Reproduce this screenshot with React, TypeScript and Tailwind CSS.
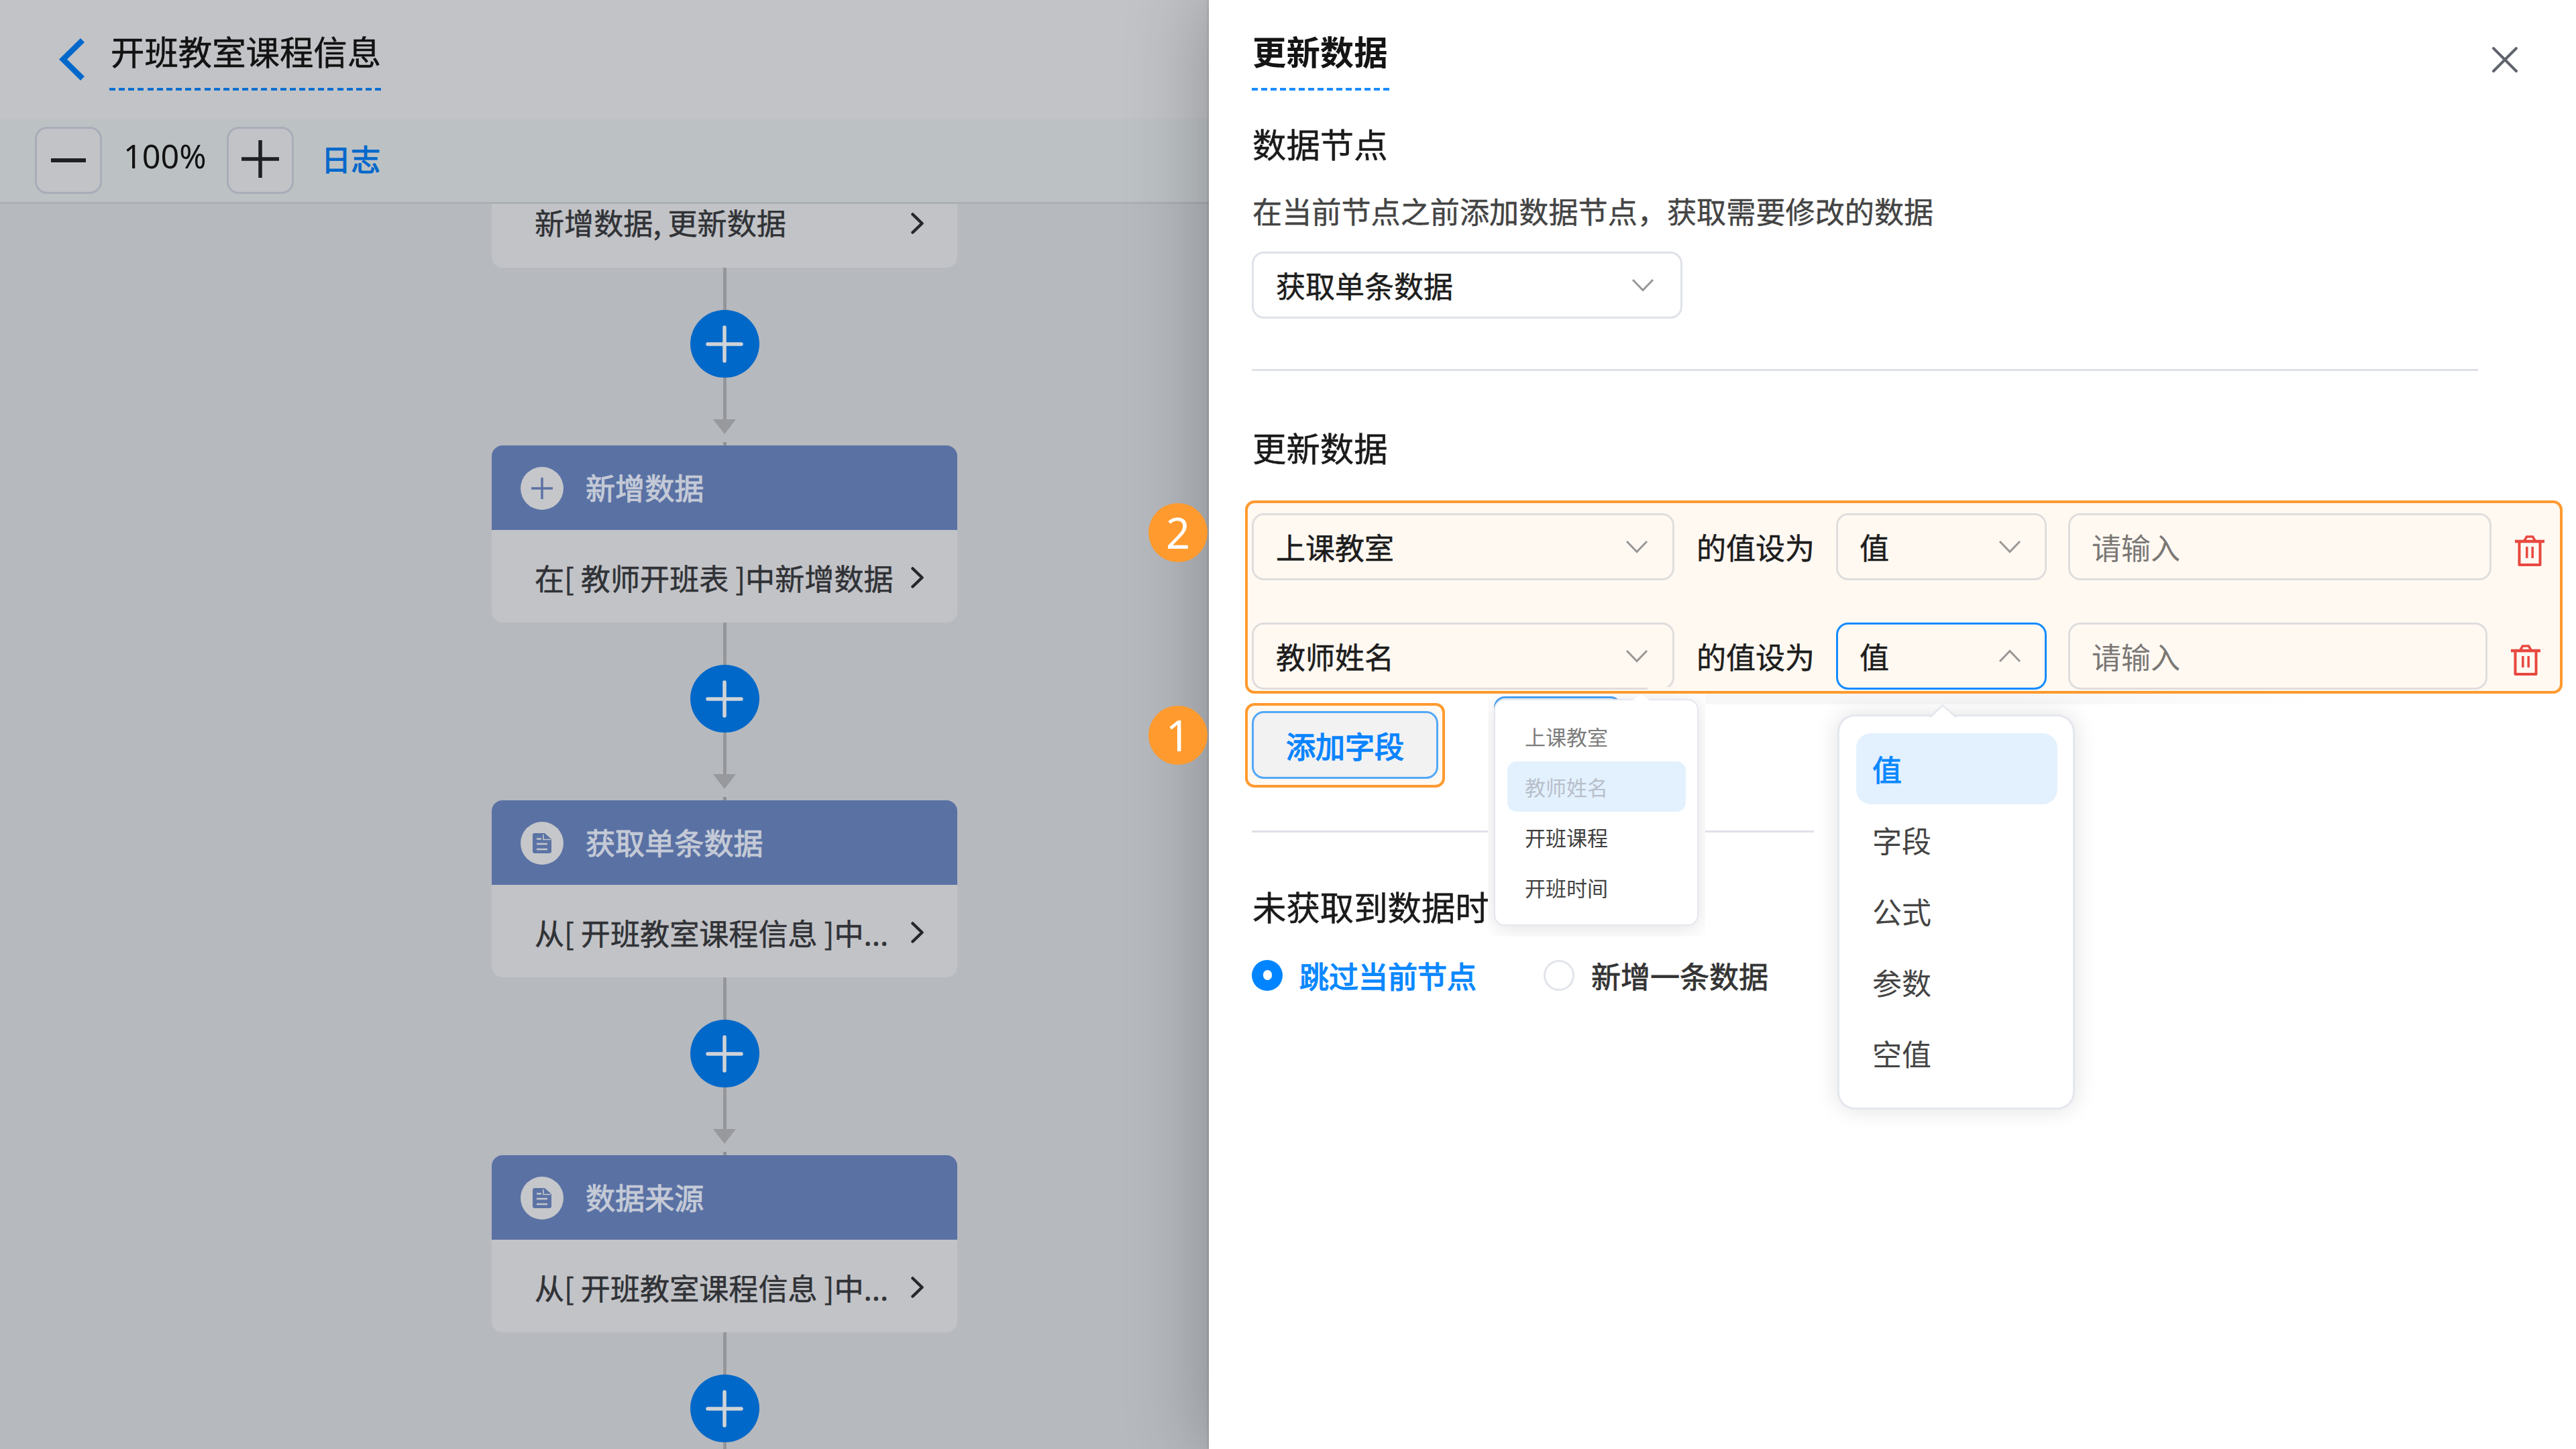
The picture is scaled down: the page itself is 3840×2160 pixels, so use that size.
import React from "react";

const FONT = "font-['Noto_Sans_CJK_SC','Noto_Sans',sans-serif]";

type NodeIcon = "plus" | "doc";

function Chevron({ up = false }: { up?: boolean }) {
  return (
    <svg width="34" height="20" viewBox="0 0 34 20" fill="none" className={up ? "rotate-180" : ""}>
      <path d="M2 2 L17 17.5 L32 2" stroke="#9a9896" strokeWidth="3" />
    </svg>
  );
}

function ArrowRight() {
  return (
    <svg width="20" height="32" viewBox="0 0 20 32" fill="none" className="shrink-0">
      <path d="M2.5 2.5 L16.5 16 L2.5 29.5" stroke="#26272a" strokeWidth="4.5" strokeLinecap="round" strokeLinejoin="round" />
    </svg>
  );
}

function Dashes({ className }: { className: string }) {
  return <div className={"h-[4px] " + className} />;
}

function IconBubble({ icon }: { icon: NodeIcon }) {
  return (
    <div className="flex size-[64px] items-center justify-center rounded-full bg-[#c5c7ca]">
      {icon === "plus" ? (
        <svg width="32" height="32" viewBox="0 0 32 32" fill="none" stroke="#5b72a4" strokeWidth="3.5">
          <path d="M16 0 V32 M0 16 H32" />
        </svg>
      ) : (
        <svg width="28" height="30" viewBox="0 0 28 30">
          <path d="M3 0 H18 L28 9 V27 Q28 30 25 30 H3 Q0 30 0 27 V3 Q0 0 3 0 Z" fill="#5b72a4" />
          <path d="M6 8.5 H13 M6 16 H22 M6 24 H22" stroke="#c5c7ca" strokeWidth="2.6" />
          <path d="M16 2 V9.5 H27" stroke="#c5c7ca" strokeWidth="1.6" fill="none" />
        </svg>
      )}
    </div>
  );
}

function FlowCard({ icon, title, text }: { icon: NodeIcon; title: string; text: string }) {
  return (
    <div className="h-[264px] w-[694px] shrink-0 overflow-hidden rounded-[16px] bg-[#c2c3c7]">
      <div className="flex h-[126px] items-center gap-[33px] bg-[#5a71a4] pl-[43px] pt-px">
        <IconBubble icon={icon} />
        <span className="mt-[-3px] text-[44.1px] leading-[60px] text-[#c4cad6] [-webkit-text-stroke:1px_#c4cad6]">{title}</span>
      </div>
      <div className="flex h-[138px] items-center justify-between pl-[64px] pr-[49px] pt-[3px]">
        <span className="whitespace-pre text-[44.1px] leading-[60px] text-[#303236] [-webkit-text-stroke:0.5px_#303236]">{text}</span>
        <ArrowRight />
      </div>
    </div>
  );
}

function Connector() {
  return (
    <div className="flex h-[265px] shrink-0 flex-col items-center">
      <div className="h-[63px] w-[5px] bg-[#94969a]" />
      <div className="flex h-[101px] w-[103px] items-center justify-center rounded-[50%] bg-[#0068c8]">
        <svg width="56" height="56" viewBox="0 0 56 56" fill="none" stroke="#d0d3d8" strokeWidth="5.5" strokeLinecap="round">
          <path d="M28 3 V53 M3 28 H53" />
        </svg>
      </div>
      <div className="h-[62px] w-[5px] bg-[#94969a]" />
      <svg width="34" height="22" viewBox="0 0 34 22">
        <path d="M0 0 H34 L17 22 Z" fill="#97999d" />
      </svg>
      <div className="mt-[12px] h-[5px] w-[5px] bg-[#8f9195]" />
    </div>
  );
}

function Select({ text, className, up = false }: { text: string; className: string; up?: boolean }) {
  return (
    <div className={"flex h-[100px] shrink-0 items-center justify-between rounded-[18px] border-[3px] " + className}>
      <span className="text-[44px] leading-[60px] text-[#1d1d1d] [-webkit-text-stroke:0.5px_#1d1d1d]">{text}</span>
      <Chevron up={up} />
    </div>
  );
}

function Trash() {
  return (
    <svg width="44" height="48" viewBox="0 0 44 48" fill="none" stroke="#e8483f" strokeWidth="4">
      <path d="M0 9 H44" strokeWidth="4.5" />
      <path d="M14 8 L17.5 2 H26.5 L30 8" strokeWidth="3.5" />
      <path d="M6.5 9 V44 H37.5 V9" strokeLinejoin="round" />
      <path d="M17.8 17 V34 M26.2 17 V34" strokeWidth="3.5" />
    </svg>
  );
}

function FieldRow({ field, active = false }: { field: string; active?: boolean }) {
  return (
    <div className="flex h-[100px] items-center">
      <Select text={field} className="w-[630px] border-[#e0dddd] pl-[33px] pr-[36px]" />
      <span className="ml-[33px] w-[176px] shrink-0 text-[44px] leading-[60px] text-[#1d1d1d] [-webkit-text-stroke:0.5px_#1d1d1d]">
        的值设为
      </span>
      <Select
        text="值"
        up={active}
        className={"ml-[32px] w-[314px] pl-[32px] pr-[35px] " + (active ? "border-[#158bff]" : "border-[#e0dddd]")}
      />
      <div
        className={
          "ml-[32px] flex h-[100px] items-center rounded-[18px] border-[3px] border-[#e0dddd] pl-[32px] text-[44px] leading-[60px] text-[#7b7875] " +
          (active ? "w-[625px]" : "w-[631px]")
        }
      >
        请输入
      </div>
      <div className="ml-[35px] mt-[14px]">
        <Trash />
      </div>
    </div>
  );
}

function Badge({ n, className }: { n: number; className: string }) {
  return (
    <div
      className={
        "absolute left-[-90px] flex size-[88px] items-center justify-center rounded-full bg-[#ff9a2e] font-['Noto_Sans',sans-serif] text-[63px] leading-[88px] text-white " +
        className
      }
    >
      {n}
    </div>
  );
}

function FieldMenu() {
  const items = [
    { label: "上课教室", tone: "text-[#7c7c7c]" },
    { label: "教师姓名", tone: "bg-[#e3f1fe] text-[#b8bfca]" },
    { label: "开班课程", tone: "text-[#3f3f3f]" },
    { label: "开班时间", tone: "text-[#444444]" },
  ];
  return (
    <div className="absolute left-[416px] top-[1034px] h-[362px] w-[324px] overflow-hidden bg-white">
      <div className="absolute left-[9px] top-[4px] h-[60px] w-[190px] rounded-[16px] border-[3px] border-[#4aa5f8]" />
      <div className="relative ml-[9px] mt-[8px] h-[338px] w-[305px] rounded-[16px] border-2 border-[#e4e7ed] bg-white shadow-[0_4px_30px_rgba(0,0,0,0.12)]">
        <div className="flex flex-col pl-[18px] pr-[17px] pt-[16px]">
          {items.map((it) => (
            <div
              key={it.label}
              className={"flex h-[75px] items-center rounded-[14px] pl-[26px] text-[31px] leading-[40px] " + it.tone}
            >
              {it.label}
            </div>
          ))}
        </div>
      </div>
      <svg className="absolute left-[213px] top-0" width="34" height="12" viewBox="0 0 34 12">
        <path d="M0 12 L16 0 L30 12 Z" fill="#ffffff" />
      </svg>
    </div>
  );
}

function ValueMenu() {
  const items = ["值", "字段", "公式", "参数", "空值"];
  return (
    <div className="absolute left-[937px] top-[1065px] h-[589px] w-[354px] rounded-[26px] border-[3px] border-[#e4e7ed] bg-white pl-[25px] pr-[23px] pt-[25px] shadow-[0_0_34px_rgba(0,0,0,0.12)]">
      <svg className="absolute left-[134px] top-[-18px]" width="42" height="20" viewBox="0 0 42 20">
        <path d="M1 19 L20 1.5 L40 19" fill="#ffffff" stroke="#e4e7ed" strokeWidth="2.5" />
        <path d="M3 20 L20 4 L38 20 Z" fill="#ffffff" />
      </svg>
      {items.map((it, i) => (
        <div
          key={it}
          className={
            "flex h-[106px] items-center rounded-[22px] pl-[24px] text-[44px] leading-[60px] " +
            (i === 0 ? "bg-[#e3f1fe] text-[#0a88ff] [-webkit-text-stroke:1px_#0a88ff]" : "text-[#444444]")
          }
        >
          {it}
        </div>
      ))}
    </div>
  );
}

function Canvas() {
  return (
    <main className="flex h-[2160px] w-[1802px] shrink-0 flex-col bg-[#b6b9be]">
      <header className="flex h-[177px] shrink-0 items-start bg-[#c2c3c7] pl-[88px]">
        <svg width="40" height="64" viewBox="0 0 40 64" fill="none" className="mt-[57px]">
          <path d="M35 3 L6 31.5 L35 60" stroke="#0068cb" strokeWidth="8.5" />
        </svg>
        <div className="ml-[35px] mt-[46px] w-[405px]">
          <h1 className="whitespace-nowrap pl-[2px] text-[50.4px] font-normal leading-[60px] text-[#121212] [-webkit-text-stroke:0.5px_#121212]">
            开班教室课程信息
          </h1>
          <Dashes className="mt-[25px] bg-[repeating-linear-gradient(90deg,#0b6fd0_0_9px,transparent_9px_14.15px)]" />
        </div>
      </header>
      <div className="flex h-[127px] shrink-0 items-start border-b-[3px] border-[#acaeb2] bg-[#bcc1c4] pl-[52px] pt-[12px]">
        <div className="flex size-[100px] items-center justify-center rounded-[18px] border-[3px] border-[#a9adb8] bg-[#c2c3c7]">
          <div className="h-[6px] w-[52px] bg-[#1f2023]" />
        </div>
        <span className="ml-[32px] mt-[13px] w-[154px] font-['Noto_Sans',sans-serif] text-[48.5px] leading-[60px] text-[#121212]">100%</span>
        <div className="flex size-[100px] items-center justify-center rounded-[18px] border-[3px] border-[#a9adb8] bg-[#c2c3c7]">
          <svg width="56" height="56" viewBox="0 0 56 56" fill="none" stroke="#1f2023" className="mt-[-4px]">
            <path d="M28 0 V56 M0 28 H56" strokeWidth="5.5" />
          </svg>
        </div>
        <span className="ml-[41px] mt-[17px] text-[44px] leading-[60px] text-[#0068cb] [-webkit-text-stroke:1.2px_#0068cb]">日志</span>
      </div>
      <div className="ml-[733px] flex min-h-0 w-[694px] flex-1 flex-col items-center self-start">
        <div className="flex h-[95px] w-full shrink-0 items-start justify-between rounded-b-[16px] bg-[#c2c3c7] pl-[64px] pr-[49px]">
          <span className="text-[44.1px] leading-[54px] text-[#303236] [-webkit-text-stroke:0.5px_#303236]">新增数据, 更新数据</span>
          <div className="mt-[13px]">
            <ArrowRight />
          </div>
        </div>
        <Connector />
        <FlowCard icon="plus" title="新增数据" text="在[ 教师开班表 ]中新增数据" />
        <Connector />
        <FlowCard icon="doc" title="获取单条数据" text="从[ 开班教室课程信息 ]中..." />
        <Connector />
        <FlowCard icon="doc" title="数据来源" text="从[ 开班教室课程信息 ]中..." />
        <Connector />
      </div>
    </main>
  );
}

function SectionTitle({ children, className }: { children: React.ReactNode; className: string }) {
  return (
    <h3
      className={
        "pl-px text-[50.4px] font-normal leading-[60px] text-[#1a1a1a] [-webkit-text-stroke:0.5px_#1a1a1a] " + className
      }
    >
      {children}
    </h3>
  );
}

function Drawer() {
  return (
    <aside className="relative flex h-[2160px] w-[2038px] shrink-0 flex-col bg-white pl-[64px] shadow-[0_0_110px_8px_rgba(0,0,0,0.24),0_0_4px_rgba(0,0,0,0.25)]">
      <div className="flex items-start justify-between pr-[86px]">
        <div className="mt-[46px] w-[205px]">
          <h2 className="whitespace-nowrap pl-px text-[50.4px] font-bold leading-[60px] text-[#141414]">更新数据</h2>
          <Dashes className="mt-[25px] bg-[repeating-linear-gradient(90deg,#1a8cff_0_9px,transparent_9px_14px)]" />
        </div>
        <svg width="40" height="40" viewBox="0 0 40 40" fill="none" className="mt-[69px]">
          <path d="M3 3 L37 37 M37 3 L3 37" stroke="#5f636b" strokeWidth="4" strokeLinecap="round" />
        </svg>
      </div>
      <SectionTitle className="mt-[49px]">数据节点</SectionTitle>
      <p className="mt-[40px] pl-px text-[44.15px] leading-[60px] text-[#444444] [-webkit-text-stroke:0.4px_#444444]">
        在当前节点之前添加数据节点，获取需要修改的数据
      </p>
      <Select text="获取单条数据" className="mt-[31px] w-[642px] border-[#dfe2e9] pl-[33px] pr-[39px]" />
      <div className="mt-[75px] h-[3px] w-[1828px] bg-[#dee1e7]" />
      <SectionTitle className="mt-[84px]">更新数据</SectionTitle>
      <section className="ml-[-10px] mt-[49px] flex h-[288px] w-[1964px] flex-col gap-[63px] rounded-[14px] border-4 border-[#ff9a2e] bg-[#fff9f2] pl-[6px] pt-[15px]">
        <FieldRow field="上课教室" />
        <FieldRow field="教师姓名" active />
      </section>
      <div className="ml-[-10px] mt-[14px] flex h-[126px] w-[298px] rounded-[14px] border-4 border-[#ff9a2e] bg-[#fff9f2] pl-[6px] pt-[8px]">
        <button className="h-[101px] w-[278px] rounded-[18px] border-[3px] border-[#54a8f8] bg-[#f2f2f2] text-[44px] leading-[60px] text-[#0a84ff] [-webkit-text-stroke:1.4px_#0a84ff]">
          添加字段
        </button>
      </div>
      <div className="mt-[64px] h-[3px] w-[838px] bg-[#dee1e7]" />
      <SectionTitle className="mt-[80px]">未获取到数据时</SectionTitle>
      <div className="mt-[42px] flex items-center text-[44px] leading-[60px]">
        <span className="flex size-[46px] items-center justify-center rounded-full bg-[#0084ff]">
          <span className="h-[15px] w-[13px] rounded-full bg-white" />
        </span>
        <span className="ml-[25px] mt-px text-[#0a88ff] [-webkit-text-stroke:1.4px_#0a88ff]">跳过当前节点</span>
        <span className="ml-[100px] size-[46px] rounded-full border-[3px] border-[#e1e4ea]" />
        <span className="ml-[25px] mt-px text-[#333333] [-webkit-text-stroke:0.8px_#333333]">新增一条数据</span>
      </div>

      <div className="absolute left-[654px] top-[1024px] h-[6px] w-[42px] bg-[#fcf7f1]" />
      <div className="absolute left-[740px] top-[1034px] h-[16px] w-[920px] bg-linear-to-r from-[#f7f7f7] via-[#f6f6f6] to-white" />
      <FieldMenu />
      <ValueMenu />
      <Badge n={2} className="top-[750px]" />
      <Badge n={1} className="top-[1052px]" />
    </aside>
  );
}

export default function App() {
  return (
    <div className={"flex h-[2160px] w-[3840px] overflow-hidden " + FONT}>
      <Canvas />
      <Drawer />
    </div>
  );
}
